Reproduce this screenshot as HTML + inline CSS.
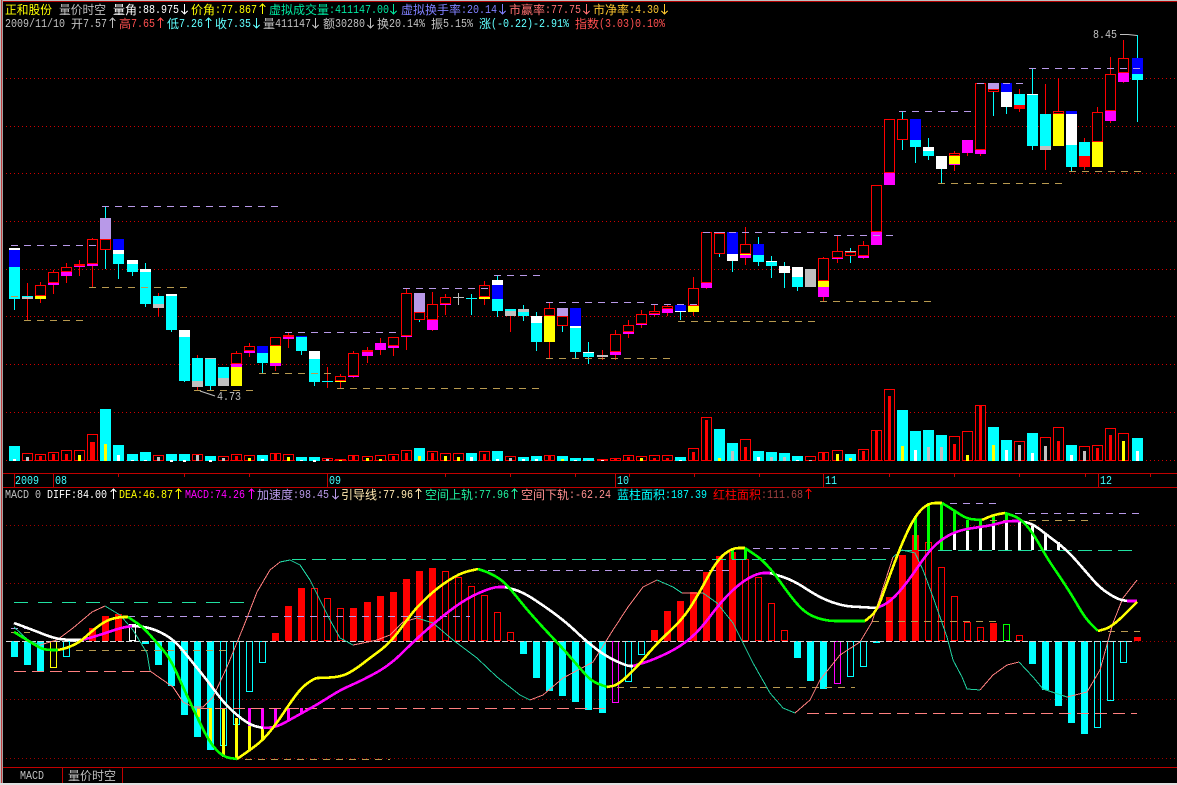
<!DOCTYPE html>
<html lang="zh">
<head>
<meta charset="utf-8">
<title>量价时空</title>
<style>
html,body{margin:0;padding:0;background:#000;width:1177px;height:785px;overflow:hidden}
svg{display:block}
text{font-size:12px;font-family:"Liberation Mono","Noto Sans CJK SC",monospace}
.c{font-family:"Liberation Sans","Noto Sans CJK SC",sans-serif}
.w{fill:none;stroke-width:1}
.l{fill:none;stroke-width:2.6;stroke-linejoin:round}
.t{fill:none;stroke-width:1}
</style>
</head>
<body>
<svg width="1177" height="785" viewBox="0 0 1177 785" xmlns="http://www.w3.org/2000/svg" shape-rendering="crispEdges">
<rect width="1177" height="785" fill="#000"/>
<!-- frame -->
<rect x="0" y="0" width="1177" height="1" fill="#c0c0c0"/>
<rect x="0" y="1" width="1177" height="1" fill="#b00000"/>
<rect x="0" y="0" width="1" height="785" fill="#c0c0c0"/>
<rect x="1" y="0" width="1" height="785" fill="#c04040"/>
<rect x="2" y="0" width="1" height="785" fill="#a8a0a0"/>
<rect x="0" y="783" width="1177" height="2" fill="#e0e0e0"/>
<!-- dotted grid -->
<path fill="none" stroke="#d00000" stroke-dasharray="1 3" d="M6 78.5H1177M6 126.5H1177M6 173.5H1177M6 221.5H1177M6 269.5H1177M6 316.5H1177M6 364.5H1177M6 412.5H1177M6 460.5H1177"/>
<path fill="none" stroke="#a00000" stroke-dasharray="1 3" d="M6 525.5H1177M6 583.5H1177M6 641.5H1177M6 699.5H1177M6 758.5H1177"/>
<!-- axes -->
<path fill="none" stroke="#c00000" d="M3 473.5H1177M3 487.5H1177M3 767.5H1177M62.5 767V783M122.5 767V783M14.5 473V487M53.5 473V487M327.5 473V487M615.5 473V487M823.5 473V487M1098.5 473V487M118.5 473v4M184.5 473v4M249.5 473v4M445.5 473v4M510.5 473v4M575.5 473v4M629.5 473v4M694.5 473v4M759.5 473v4M889.5 473v4M954.5 473v4M1019.5 473v4M1085.5 473v4M1150.5 473v4"/>
<!-- wicks -->
<path class="w" stroke="#00ffff" d="M14.5 299V310M105.5 206V269M118.5 264V279M132.5 272V276M145.5 263V307M171.5 330V332M184.5 381V382M210.5 386V391M262.5 363V373M301.5 351V355M314.5 382V386M419.5 320V322M471.5 294V315M497.5 275V317M523.5 305V321M536.5 312V351M562.5 326V332M575.5 352V358M588.5 342V364M680.5 311V320M719.5 254V257M732.5 261V272M758.5 237V266M771.5 256V278M784.5 262V288M797.5 287V291M850.5 248V263M902.5 111V150M915.5 147V163M928.5 138V160M941.5 169V183M993.5 92V116M1006.5 107V114M1032.5 68V150M1071.5 167V171M1137.5 35V122"/>
<path class="w" stroke="#ff0000" d="M27.5 283V320M40.5 282V303M53.5 270V294M66.5 263V283M79.5 260V276M92.5 238V287M158.5 293V317M197.5 355V390M236.5 351V353M249.5 343V357M275.5 366V371M288.5 332V348M327.5 367V388M340.5 374V388M353.5 351V378M367.5 347V363M380.5 338V355M393.5 348V356M406.5 288V350M432.5 292V331M445.5 294V315M484.5 281V305M510.5 316V332M549.5 303V358M602.5 350V360M615.5 330V360M628.5 320V338M641.5 310V328M654.5 305V317M667.5 304V316M693.5 277V316M706.5 232V289M745.5 227V265M823.5 257V301M837.5 236V263M863.5 241V259M954.5 151V171M967.5 153V156M980.5 150V156M1019.5 89V112M1045.5 84V170M1058.5 78V111M1084.5 138V170M1097.5 107V112M1110.5 57V123M1123.5 40V83"/>
<path class="w" stroke="#c0c0c0" d="M458.5 293V305"/>
<!-- candle bodies -->
<path fill="#00ffff" d="M9 267h11V299h-11zM22 296h11V297h-11zM113 254h11V264h-11zM127 264h11V272h-11zM140 272h11V304h-11zM153 296h11V304h-11zM166 296h11V330h-11zM179 337h11V381h-11zM192 358h11V381h-11zM205 359h11V386h-11zM218 367h11V378h-11zM257 353h11V363h-11zM296 337h11V351h-11zM309 359h11V382h-11zM322 381h11V382h-11zM466 298h11V299h-11zM492 299h11V311h-11zM505 309h11V311h-11zM518 312h11V316h-11zM531 323h11V342h-11zM570 328h11V352h-11zM583 353h11V357h-11zM753 255h11V262h-11zM766 262h11V266h-11zM792 277h11V287h-11zM910 140h11V147h-11zM923 151h11V156h-11zM1014 94h11V105h-11zM1027 95h11V146h-11zM1040 114h11V146h-11zM1066 145h11V167h-11zM1079 142h11V156h-11zM1132 74h11V80h-11z"/>
<path fill="#0000ff" d="M9 250h11V267h-11zM113 239h11V250h-11zM257 346h11V353h-11zM296 336h11V337h-11zM492 285h11V299h-11zM570 308h11V326h-11zM675 305h11V311h-11zM727 232h11V254h-11zM753 244h11V255h-11zM910 119h11V140h-11zM1001 83h11V92h-11zM1066 111h11V114h-11zM1132 58h11V74h-11z"/>
<path fill="#ffffff" d="M9 248h11V250h-11zM113 250h11V254h-11zM127 260h11V264h-11zM140 269h11V272h-11zM166 294h11V296h-11zM179 330h11V337h-11zM309 351h11V359h-11zM492 280h11V285h-11zM531 316h11V323h-11zM570 326h11V328h-11zM583 352h11V353h-11zM675 311h11V312h-11zM727 254h11V261h-11zM766 261h11V262h-11zM779 266h11V273h-11zM792 267h11V277h-11zM923 147h11V151h-11zM936 156h11V169h-11zM1001 92h11V107h-11zM1027 94h11V95h-11zM1066 114h11V145h-11z"/>
<path fill="#c0c0c0" d="M22 297h11V299h-11zM153 304h11V308h-11zM192 381h11V387h-11zM205 358h11V359h-11zM218 378h11V386h-11zM453 297h11V298h-11zM505 311h11V316h-11zM518 309h11V312h-11zM597 355h11V357h-11zM805 269h11V287h-11zM845 251h11V252h-11zM1040 146h11V150h-11z"/>
<path fill="#b899e8" d="M100 218h11V239h-11zM414 293h11V312h-11zM557 308h11V316h-11zM988 83h11V89h-11zM714 232h11V233h-11z"/>
<path fill="#ffff00" d="M35 296h11V299h-11zM231 367h11V386h-11zM270 346h11V363h-11zM335 381h11V382h-11zM479 297h11V299h-11zM544 316h11V342h-11zM688 306h11V312h-11zM740 254h11V255h-11zM818 281h11V287h-11zM949 156h11V164h-11zM1053 114h11V146h-11zM1092 142h11V167h-11z"/>
<path fill="#ff00ff" d="M48 283h11V285h-11zM61 272h11V276h-11zM74 266h11V267h-11zM87 264h11V266h-11zM231 364h11V367h-11zM244 351h11V353h-11zM270 363h11V366h-11zM283 337h11V339h-11zM348 376h11V377h-11zM362 352h11V356h-11zM375 343h11V350h-11zM388 346h11V348h-11zM401 336h11V337h-11zM427 320h11V330h-11zM440 304h11V305h-11zM610 352h11V355h-11zM623 332h11V334h-11zM636 324h11V325h-11zM649 314h11V315h-11zM662 309h11V313h-11zM701 283h11V288h-11zM740 255h11V258h-11zM818 287h11V297h-11zM832 258h11V259h-11zM858 256h11V258h-11zM871 232h11V245h-11zM884 173h11V185h-11zM949 164h11V165h-11zM962 140h11V153h-11zM975 150h11V154h-11zM1105 111h11V121h-11zM1118 73h11V82h-11z"/>
<path fill="#ff0000" d="M1079 156h11V167h-11zM1014 105h11V109h-11z"/>
<path fill="#000" stroke="#ff0000" d="M35.5 285.5h10V295.5h-10zM48.5 272.5h10V282.5h-10zM61.5 267.5h10V271.5h-10zM74.5 264.5h10V265.5h-10zM87.5 239.5h10V263.5h-10zM100.5 239.5h10V249.5h-10zM231.5 353.5h10V363.5h-10zM244.5 346.5h10V350.5h-10zM270.5 337.5h10V345.5h-10zM283.5 335.5h10V336.5h-10zM335.5 376.5h10V380.5h-10zM348.5 353.5h10V375.5h-10zM362.5 350.5h10V351.5h-10zM388.5 337.5h10V345.5h-10zM401.5 293.5h10V335.5h-10zM414.5 312.5h10V319.5h-10zM427.5 304.5h10V319.5h-10zM440.5 297.5h10V303.5h-10zM479.5 285.5h10V296.5h-10zM544.5 308.5h10V315.5h-10zM557.5 316.5h10V325.5h-10zM610.5 334.5h10V351.5h-10zM623.5 325.5h10V331.5h-10zM636.5 314.5h10V323.5h-10zM649.5 311.5h10V313.5h-10zM662.5 306.5h10V308.5h-10zM688.5 288.5h10V305.5h-10zM701.5 232.5h10V282.5h-10zM714.5 233.5h10V253.5h-10zM740.5 244.5h10V253.5h-10zM818.5 258.5h10V280.5h-10zM832.5 251.5h10V257.5h-10zM845.5 252.5h10V255.5h-10zM858.5 245.5h10V255.5h-10zM871.5 185.5h10V231.5h-10zM884.5 119.5h10V172.5h-10zM897.5 119.5h10V139.5h-10zM949.5 153.5h10V155.5h-10zM975.5 83.5h10V149.5h-10zM988.5 89.5h10V91.5h-10zM1053.5 111.5h10V113.5h-10zM1092.5 112.5h10V141.5h-10zM1105.5 74.5h10V110.5h-10zM1118.5 58.5h10V72.5h-10z"/>
<!-- price dashed levels -->
<path fill="none" stroke="#b899e8" stroke-dasharray="7 6" d="M102 206.5H279M11 245.5H100M285 332.5H397M403 288.5H488M494 275.5H540M546 302.5H645M651 304.5H697M703 232.5H827M834 235.5H893M899 111.5H971M977 83.5H1025M1029 68.5H1141"/>
<path fill="none" stroke="#b89a50" stroke-dasharray="7 6" d="M24 320.5H83M89 287.5H188M194 390.5H253M259 373.5H331M337 388.5H540M546 358.5H672M678 321.5H815M820 301.5H933M938 183.5H1062M1069 171.5H1141M11 296.5H18"/>
<!-- price labels -->
<path fill="none" stroke="#c0c0c0" shape-rendering="auto" d="M200 391L215 396M1120 34.5H1128L1137 35.5"/>
<text x="217" y="400" textLength="24" lengthAdjust="spacingAndGlyphs" fill="#c0c0c0" shape-rendering="auto">4.73</text>
<text x="1093" y="38" textLength="24" lengthAdjust="spacingAndGlyphs" fill="#c0c0c0">8.45</text>
<!-- volume -->
<path fill="#00ffff" d="M9 446h11V461h-11zM100 409h11V461h-11zM113 445h11V461h-11zM127 454h11V461h-11zM140 452h11V461h-11zM166 454h11V461h-11zM179 454h11V461h-11zM205 456h11V461h-11zM257 455h11V461h-11zM296 457h11V461h-11zM309 457h11V461h-11zM414 448h11V461h-11zM466 453h11V461h-11zM492 451h11V461h-11zM518 457h11V461h-11zM531 456h11V461h-11zM557 456h11V461h-11zM570 458h11V461h-11zM583 458h11V461h-11zM675 457h11V461h-11zM714 429h11V461h-11zM727 443h11V461h-11zM753 451h11V461h-11zM766 452h11V461h-11zM779 453h11V461h-11zM792 456h11V461h-11zM845 454h11V461h-11zM897 410h11V461h-11zM910 431h11V461h-11zM923 430h11V461h-11zM936 435h11V461h-11zM988 427h11V461h-11zM1001 440h11V461h-11zM1027 433h11V461h-11zM1066 445h11V461h-11zM1132 438h11V461h-11z"/>
<path fill="#000" stroke="#ff0000" d="M22.5 453.5h10V460.5h-10zM35.5 454.5h10V460.5h-10zM48.5 452.5h10V460.5h-10zM61.5 450.5h10V460.5h-10zM74.5 450.5h10V460.5h-10zM87.5 434.5h10V460.5h-10zM153.5 455.5h10V460.5h-10zM192.5 454.5h10V460.5h-10zM218.5 456.5h10V460.5h-10zM231.5 454.5h10V460.5h-10zM244.5 455.5h10V460.5h-10zM270.5 453.5h10V460.5h-10zM283.5 454.5h10V460.5h-10zM322.5 458.5h10V460.5h-10zM335.5 459.5h10V460.5h-10zM348.5 455.5h10V460.5h-10zM362.5 456.5h10V460.5h-10zM375.5 455.5h10V460.5h-10zM388.5 454.5h10V460.5h-10zM401.5 450.5h10V460.5h-10zM427.5 451.5h10V460.5h-10zM440.5 453.5h10V460.5h-10zM453.5 453.5h10V460.5h-10zM479.5 451.5h10V460.5h-10zM505.5 456.5h10V460.5h-10zM544.5 455.5h10V460.5h-10zM597.5 459.5h10V460.5h-10zM610.5 458.5h10V460.5h-10zM623.5 455.5h10V460.5h-10zM636.5 456.5h10V460.5h-10zM649.5 455.5h10V460.5h-10zM662.5 455.5h10V460.5h-10zM688.5 448.5h10V460.5h-10zM701.5 417.5h10V460.5h-10zM740.5 439.5h10V460.5h-10zM805.5 456.5h10V460.5h-10zM818.5 452.5h10V460.5h-10zM832.5 450.5h10V460.5h-10zM858.5 449.5h10V460.5h-10zM871.5 430.5h10V460.5h-10zM884.5 389.5h10V460.5h-10zM949.5 436.5h10V460.5h-10zM962.5 431.5h10V460.5h-10zM975.5 405.5h10V460.5h-10zM1014.5 441.5h10V460.5h-10zM1040.5 437.5h10V460.5h-10zM1053.5 427.5h10V460.5h-10zM1079.5 446.5h10V460.5h-10zM1092.5 445.5h10V460.5h-10zM1105.5 428.5h10V460.5h-10zM1118.5 433.5h10V460.5h-10z"/>
<path fill="#ffffff" d="M13 459h3V461h-3zM117 455h3V461h-3zM131 460h3V461h-3zM144 460h3V461h-3zM170 460h3V462h-3zM183 460h3V462h-3zM209 460h3V462h-3zM261 459h3V461h-3zM300 460h3V461h-3zM313 460h3V462h-3zM470 457h3V461h-3zM496 459h3V461h-3zM522 459h3V461h-3zM535 459h3V461h-3zM574 460h3V461h-3zM601 460h3V461h-3zM679 460h3V461h-3zM757 457h3V461h-3zM796 460h3V461h-3zM914 450h3V461h-3zM1005 450h3V461h-3zM1031 453h3V461h-3zM1070 455h3V461h-3zM1136 451h3V461h-3z"/>
<path fill="#c0c0c0" d="M26 457h3V461h-3zM157 457h3V461h-3zM196 455h3V461h-3zM222 458h3V461h-3zM326 459h3V461h-3zM509 458h3V461h-3zM587 460h3V461h-3zM731 451h3V461h-3zM770 457h3V461h-3zM783 457h3V461h-3zM809 460h3V461h-3zM927 447h3V461h-3zM940 447h3V461h-3zM1018 445h3V461h-3zM1044 446h3V461h-3zM1083 451h3V461h-3z"/>
<path fill="#ffff00" d="M78 455h3V461h-3zM104 444h3V461h-3zM248 458h3V461h-3zM287 457h3V461h-3zM339 460h3V461h-3zM366 458h3V461h-3zM379 459h3V461h-3zM418 456h3V461h-3zM444 456h3V461h-3zM457 457h3V461h-3zM561 459h3V461h-3zM640 458h3V461h-3zM718 458h3V461h-3zM836 454h3V461h-3zM849 458h3V461h-3zM901 446h3V461h-3zM966 455h3V461h-3zM992 445h3V461h-3zM1122 441h3V461h-3z"/>
<path fill="#ff0000" d="M39 456h3V461h-3zM52 454h3V461h-3zM65 454h3V461h-3zM90 442h5V461h-5zM235 456h3V461h-3zM274 454h3V461h-3zM352 456h3V461h-3zM392 456h3V461h-3zM405 453h3V461h-3zM431 453h3V461h-3zM483 454h3V461h-3zM548 456h3V461h-3zM614 459h3V461h-3zM627 457h3V461h-3zM653 458h3V461h-3zM666 458h3V461h-3zM692 452h3V461h-3zM705 420h3V461h-3zM744 447h3V461h-3zM822 453h3V461h-3zM862 451h3V461h-3zM875 431h3V461h-3zM888 396h3V461h-3zM953 444h3V461h-3zM979 406h3V461h-3zM1057 441h3V461h-3zM1096 448h3V461h-3zM1109 435h3V461h-3z"/>
<!-- MACD histogram -->
<path fill="#00ffff" d="M11 641h7V657h-7zM24 641h7V665h-7zM37 641h7V672h-7zM142 641h7V644h-7zM155 641h7V665h-7zM168 641h7V686h-7zM181 641h7V715h-7zM194 641h7V737h-7zM207 641h7V750h-7zM520 641h7V654h-7zM533 641h7V678h-7zM546 641h7V691h-7zM559 641h7V696h-7zM572 641h7V702h-7zM585 641h7V710h-7zM599 641h7V713h-7zM794 641h7V658h-7zM807 641h7V681h-7zM820 641h7V689h-7zM1029 641h7V664h-7zM1042 641h7V690h-7zM1055 641h7V706h-7zM1068 641h7V723h-7zM1081 641h7V734h-7z"/>
<path fill="#ff0000" d="M89 628h7V641h-7zM102 616h7V641h-7zM115 614h7V641h-7zM272 633h7V641h-7zM285 606h7V641h-7zM298 588h7V641h-7zM350 608h7V641h-7zM364 602h7V641h-7zM377 596h7V641h-7zM390 592h7V641h-7zM403 579h7V641h-7zM416 571h7V641h-7zM429 568h7V641h-7zM651 630h7V641h-7zM664 611h7V641h-7zM677 601h7V641h-7zM690 592h7V641h-7zM703 572h7V641h-7zM716 556h7V641h-7zM729 552h7V641h-7zM886 597h7V641h-7zM899 555h7V641h-7zM912 535h7V641h-7zM990 623h7V641h-7zM1134 637h7V641h-7z"/>
<path fill="none" stroke="#00ffff" d="M63.5 641.5h6V656.5h-6zM220.5 641.5h6V745.5h-6zM233.5 641.5h6V724.5h-6zM246.5 641.5h6V691.5h-6zM259.5 641.5h6V662.5h-6zM625.5 641.5h6V681.5h-6zM638.5 641.5h6V654.5h-6zM847.5 641.5h6V676.5h-6zM860.5 641.5h6V666.5h-6zM873.5 641.5h6V642.5h-6zM1094.5 641.5h6V727.5h-6zM1107.5 641.5h6V700.5h-6zM1120.5 641.5h6V662.5h-6z"/>
<path fill="none" stroke="#ff0000" d="M311.5 588.5h6V640.5h-6zM324.5 598.5h6V640.5h-6zM337.5 608.5h6V640.5h-6zM442.5 571.5h6V640.5h-6zM455.5 577.5h6V640.5h-6zM468.5 586.5h6V640.5h-6zM481.5 595.5h6V640.5h-6zM494.5 612.5h6V640.5h-6zM507.5 632.5h6V640.5h-6zM742.5 559.5h6V640.5h-6zM755.5 577.5h6V640.5h-6zM768.5 603.5h6V640.5h-6zM781.5 630.5h6V640.5h-6zM925.5 542.5h6V640.5h-6zM938.5 567.5h6V640.5h-6zM951.5 596.5h6V640.5h-6zM964.5 622.5h6V640.5h-6zM977.5 627.5h6V640.5h-6zM1016.5 635.5h6V640.5h-6z"/>
<path fill="none" stroke="#ffff00" d="M50.5 641.5h6V667.5h-6z"/>
<path fill="none" stroke="#ffffff" d="M129.5 624.5h6V640.5h-6z"/>
<path fill="none" stroke="#ff00ff" d="M612.5 641.5h6V702.5h-6zM834.5 641.5h6V683.5h-6z"/>
<path fill="none" stroke="#00ff00" d="M1003.5 624.5h6V640.5h-6z"/>
<path fill="none" stroke="#d8d8d8" stroke-dasharray="6 2" d="M6 641.5H1132"/>
<!-- connector bars -->
<path fill="#ffff00" d="M197 708h3V717h-3zM209 708h3V743h-3zM222 708h3V757h-3zM235 718h3V759h-3zM248 726h3V750h-3zM261 728h3V740h-3z"/>
<path fill="#ff00ff" d="M248 708h3V726h-3zM261 708h3V728h-3zM274 708h3V727h-3zM287 708h3V721h-3zM300 708h3V713h-3z"/>
<path fill="#00ff00" d="M914 516h3V550h-3zM927 503h3V550h-3zM940 503h3V550h-3zM953 510h3V533h-3zM966 520h3V531h-3zM979 520h3V527h-3zM992 516h3V525h-3zM1005 513h3V521h-3zM731 548h3V559h-3zM744 548h3V559h-3z"/>
<path fill="#ffffff" d="M953 533h3V550h-3zM966 531h3V550h-3zM979 527h3V550h-3zM992 525h3V550h-3zM1005 521h3V550h-3zM1018 520h3V550h-3zM1031 526h3V550h-3zM1044 534h3V550h-3zM1057 542h3V550h-3z"/>
<!-- MACD dashed levels -->
<path fill="none" stroke="#20e0a0" stroke-dasharray="14 10" d="M14 602.5H250"/>
<path fill="none" stroke="#20e0a0" stroke-dasharray="14 6" d="M292 559.5H887M898 550.5H1137"/>
<path fill="none" stroke="#b899e8" stroke-dasharray="7 6" d="M11 628.5H30M128 616.5H470M488 570.5H735M753 548.5H893M950 503.5H998M1015 513.5H1141"/>
<path fill="none" stroke="#b89a50" stroke-dasharray="7 6" d="M11 632.5H30M76 650.5H227M872 621.5H1000M990 520.5H1090M1108 631.5H1140M617 687.5H855M245 759.5H390"/>
<path fill="none" stroke="#ff8080" stroke-dasharray="12 6" d="M14 671.5H150M197 708.5H610M807 713.5H1137"/>
<!-- thin line -->
<polyline class="t" stroke="#20d0a0" points="14,627 28,640 40,645"/>
<polyline class="t" stroke="#ff8080" points="40,645 57,640 73,628 92,612 105,606"/>
<polyline class="t" stroke="#20d0a0" points="105,606 120,615 133,630 147,653 150,671"/>
<polyline class="t" stroke="#ff8080" points="150,671 160,678 173,687 183,702 193,707 203,707 213,697 227,667 245,623 257,592 270,570 280,562"/>
<polyline class="t" stroke="#20d0a0" points="280,562 290,560 300,565 310,580 320,600 330,620 340,638 353,645"/>
<polyline class="t" stroke="#ff8080" points="353,645 363,643 377,640 390,635 403,622 417,618"/>
<polyline class="t" stroke="#20d0a0" points="417,618 433,623 453,640 477,658 497,677 520,695 530,700"/>
<polyline class="t" stroke="#ff8080" points="530,700 543,695 563,678 593,662 613,630 628,607 643,587 657,580"/>
<polyline class="t" stroke="#20d0a0" points="657,580 673,587 682,593"/>
<polyline class="t" stroke="#ff8080" points="682,593 703,593"/>
<polyline class="t" stroke="#20d0a0" points="703,593 717,603 733,623 743,643 753,663 770,693 783,708 795,713"/>
<polyline class="t" stroke="#ff8080" points="795,713 810,700 820,680 840,655 860,642 872,622 893,557"/>
<polyline class="t" stroke="#20d0a0" points="893,557 902,550 915,553 923,570 933,597 947,637 953,660 962,677 967,689 980,690"/>
<polyline class="t" stroke="#ff8080" points="980,690 993,675 1007,665 1019,662"/>
<polyline class="t" stroke="#20d0a0" points="1019,662 1033,677 1043,689 1067,697"/>
<polyline class="t" stroke="#ff8080" points="1067,697 1087,692 1100,670 1113,623 1123,598 1137,580"/>
<!-- DEA line -->
<path class="l" stroke="#ffffff" d="M14 623L23.5 626.5Q33 630 43 634Q53 638 60 639Q67 640 74.5 640L82 640"/>
<path class="l" stroke="#ff00ff" d="M82 640L91 637.5Q100 635 110 631.5Q120 628 126 627L132 626"/>
<path class="l" stroke="#ffffff" d="M132 626L139.5 626.5Q147 627 155 630Q163 633 170 638Q177 643 185 653Q193 663 200 671.5Q207 680 213.5 689Q220 698 226.5 705Q233 712 241.5 718.5Q250 725 256.5 726.5L263 728"/>
<path class="l" stroke="#ff00ff" d="M263 728L270 727.5Q277 727 285 722.5Q293 718 306.5 710.5Q320 703 330 696.5Q340 690 351.5 685Q363 680 376.5 672.5Q390 665 401.5 653.5Q413 642 426.5 630Q440 618 453.5 608Q467 598 480 592.5Q493 587 499 587L505 587"/>
<path class="l" stroke="#ffffff" d="M505 587L514 589.5Q523 592 535 600Q547 608 557 615.5Q567 623 577 632.5Q587 642 597 649.5Q607 657 617 661.5Q627 666 630 666L633 666"/>
<path class="l" stroke="#ff00ff" d="M633 666L643 663Q653 660 666.5 653.5Q680 647 690 638.5Q700 630 710 616.5Q720 603 730 593Q740 583 749 578Q758 573 764 573L770 573"/>
<path class="l" stroke="#ffffff" d="M770 573L781.5 576.5Q793 580 806.5 589Q820 598 831.5 602Q843 606 851.5 606.5Q860 607 868.5 607.5L877 608"/>
<path class="l" stroke="#ff00ff" d="M877 608L883.5 605Q890 602 898.5 592.5Q907 583 917.5 567.5Q928 552 935.5 545Q943 538 951.5 534Q960 530 970 528.5Q980 527 986.5 526Q993 525 1000 523Q1007 521 1013.5 521L1020 521"/>
<path class="l" stroke="#ffffff" d="M1020 521L1026.5 522.5Q1033 524 1040 529.5Q1047 535 1057 542.5Q1067 550 1077 561.5Q1087 573 1093.5 580.5Q1100 588 1108.5 593.5Q1117 599 1122 600L1127 601"/>
<path class="l" stroke="#ff00ff" d="M1127 601L1137 601"/>
<!-- DIFF line -->
<path class="l" stroke="#00ff00" d="M14 632L20.5 636Q27 640 33.5 644Q40 648 43.5 649Q47 650 52.5 650L58 650"/>
<path class="l" stroke="#ffff00" d="M58 650L62.5 649Q67 648 73.5 645Q80 642 86.5 636Q93 630 100 625Q107 620 113.5 618.5Q120 617 124 617L128 617"/>
<path class="l" stroke="#00ff00" d="M128 617L135.5 622Q143 627 150 635Q157 643 163.5 650.5Q170 658 176.5 672.5Q183 687 190 702Q197 717 203.5 730Q210 743 216.5 750Q223 757 230 758L237 759"/>
<path class="l" stroke="#ffff00" d="M237 759L243.5 754.5Q250 750 256.5 745Q263 740 270 731.5Q277 723 283.5 713Q290 703 296 695Q302 687 308.5 682.5Q315 678 317.5 678Q320 678 330 677.5Q340 677 346.5 674Q353 671 361.5 664.5Q370 658 380 650.5Q390 643 398.5 631.5Q407 620 412 613.5Q417 607 427 597.5Q437 588 448.5 580.5Q460 573 469 571L478 569"/>
<path class="l" stroke="#00ff00" d="M478 569L484 571Q490 573 497.5 577.5Q505 582 516 596Q527 610 538.5 622.5Q550 635 558.5 644Q567 653 575 662.5Q583 672 588 677Q593 682 600 684.5L607 687"/>
<path class="l" stroke="#ffff00" d="M607 687L612.5 686Q618 685 627.5 676Q637 667 647 655Q657 643 669.5 631.5Q682 620 689.5 608.5Q697 597 707 578.5Q717 560 724.5 554Q732 548 738.5 548L745 548"/>
<path class="l" stroke="#00ff00" d="M745 548L756 555.5Q767 563 780 581.5Q793 600 800.5 607.5Q808 615 817.5 618Q827 621 835 621Q843 621 854 621L865 621"/>
<path class="l" stroke="#ffff00" d="M865 621L871 616Q877 611 882.5 595.5Q888 580 895 561.5Q902 543 908.5 529.5Q915 516 921.5 509.5Q928 503 935 503L942 503"/>
<path class="l" stroke="#00ff00" d="M942 503L948.5 507Q955 511 961 515Q967 519 974.5 519.5L982 520"/>
<path class="l" stroke="#ffff00" d="M982 520L987.5 517.5Q993 515 999 514L1005 513"/>
<path class="l" stroke="#00ff00" d="M1005 513L1012.5 515.5Q1020 518 1026.5 525.5Q1033 533 1040 545.5Q1047 558 1053.5 567.5Q1060 577 1066.5 587Q1073 597 1079 607.5Q1085 618 1091.5 624.5L1098 631"/>
<path class="l" stroke="#ffff00" d="M1098 631L1105 629Q1112 627 1124.5 614.5L1137 602"/>
<!-- header line 1 -->
<text class="c" x="5" y="14" textLength="47" lengthAdjust="spacingAndGlyphs" fill="#ffff00">正和股份</text>
<text class="c" x="59" y="14" textLength="47" lengthAdjust="spacingAndGlyphs" fill="#c0c0c0">量价时空</text>
<text class="c" x="113" y="14" textLength="24" lengthAdjust="spacingAndGlyphs" fill="#ffffff">量角</text>
<text x="137" y="13" textLength="42" lengthAdjust="spacingAndGlyphs" fill="#ffffff">:88.975</text>
<path fill="none" stroke="#ffffff" d="M184.5 4v10m-3-3l3 3 3-3"/>
<text class="c" x="191" y="14" textLength="24" lengthAdjust="spacingAndGlyphs" fill="#ffff00">价角</text>
<text x="215" y="13" textLength="42" lengthAdjust="spacingAndGlyphs" fill="#ffff00">:77.867</text>
<path fill="none" stroke="#ffff00" d="M262.5 14v-10m-3 3l3-3 3 3"/>
<text class="c" x="269" y="14" textLength="60" lengthAdjust="spacingAndGlyphs" fill="#00e8a0">虚拟成交量</text>
<text x="329" y="13" textLength="60" lengthAdjust="spacingAndGlyphs" fill="#00e8a0">:411147.00</text>
<path fill="none" stroke="#00e8a0" d="M393.5 4v10m-3-3l3 3 3-3"/>
<text class="c" x="401" y="14" textLength="60" lengthAdjust="spacingAndGlyphs" fill="#8080ff">虚拟换手率</text>
<text x="461" y="13" textLength="36" lengthAdjust="spacingAndGlyphs" fill="#8080ff">:20.14</text>
<path fill="none" stroke="#8080ff" d="M502.5 4v10m-3-3l3 3 3-3"/>
<text class="c" x="509" y="14" textLength="36" lengthAdjust="spacingAndGlyphs" fill="#ff7070">市赢率</text>
<text x="545" y="13" textLength="36" lengthAdjust="spacingAndGlyphs" fill="#ff7070">:77.75</text>
<path fill="none" stroke="#ff7070" d="M586.5 4v10m-3-3l3 3 3-3"/>
<text class="c" x="593" y="14" textLength="36" lengthAdjust="spacingAndGlyphs" fill="#ffc830">市净率</text>
<text x="629" y="13" textLength="30" lengthAdjust="spacingAndGlyphs" fill="#ffc830">:4.30</text>
<path fill="none" stroke="#ffc830" d="M664.5 4v10m-3-3l3 3 3-3"/>
<!-- header line 2 -->
<text x="5" y="27" textLength="60" lengthAdjust="spacingAndGlyphs" fill="#c0c0c0">2009/11/10</text>
<text class="c" x="71" y="28" fill="#c0c0c0">开</text>
<text x="83" y="27" textLength="24" lengthAdjust="spacingAndGlyphs" fill="#c0c0c0">7.57</text>
<path fill="none" stroke="#c0c0c0" d="M112.5 28v-10m-3 3l3-3 3 3"/>
<text class="c" x="119" y="28" fill="#ff5050">高</text>
<text x="131" y="27" textLength="24" lengthAdjust="spacingAndGlyphs" fill="#ff5050">7.65</text>
<path fill="none" stroke="#ff5050" d="M160.5 28v-10m-3 3l3-3 3 3"/>
<text class="c" x="167" y="28" fill="#60ffff">低</text>
<text x="179" y="27" textLength="24" lengthAdjust="spacingAndGlyphs" fill="#60ffff">7.26</text>
<path fill="none" stroke="#60ffff" d="M208.5 28v-10m-3 3l3-3 3 3"/>
<text class="c" x="215" y="28" fill="#60ffff">收</text>
<text x="227" y="27" textLength="24" lengthAdjust="spacingAndGlyphs" fill="#60ffff">7.35</text>
<path fill="none" stroke="#60ffff" d="M256.5 18v10m-3-3l3 3 3-3"/>
<text class="c" x="263" y="28" fill="#c0c0c0">量</text>
<text x="275" y="27" textLength="36" lengthAdjust="spacingAndGlyphs" fill="#c0c0c0">411147</text>
<path fill="none" stroke="#c0c0c0" d="M315.5 18v10m-3-3l3 3 3-3"/>
<text class="c" x="323" y="28" fill="#c0c0c0">额</text>
<text x="335" y="27" textLength="30" lengthAdjust="spacingAndGlyphs" fill="#c0c0c0">30280</text>
<path fill="none" stroke="#c0c0c0" d="M370.5 18v10m-3-3l3 3 3-3"/>
<text class="c" x="377" y="28" fill="#c0c0c0">换</text>
<text x="389" y="27" textLength="36" lengthAdjust="spacingAndGlyphs" fill="#c0c0c0">20.14%</text>
<text class="c" x="431" y="28" fill="#c0c0c0">振</text>
<text x="443" y="27" textLength="30" lengthAdjust="spacingAndGlyphs" fill="#c0c0c0">5.15%</text>
<text class="c" x="479" y="28" fill="#60ffff">涨</text>
<text x="491" y="27" textLength="78" lengthAdjust="spacingAndGlyphs" fill="#60ffff">(-0.22)-2.91%</text>
<text class="c" x="575" y="28" textLength="24" lengthAdjust="spacingAndGlyphs" fill="#ff5050">指数</text>
<text x="599" y="27" textLength="66" lengthAdjust="spacingAndGlyphs" fill="#ff5050">(3.03)0.10%</text>
<!-- date labels -->
<text x="15" y="484" textLength="24" lengthAdjust="spacingAndGlyphs" fill="#40ffff">2009</text>
<text x="55" y="484" textLength="12" lengthAdjust="spacingAndGlyphs" fill="#40ffff">08</text>
<text x="329" y="484" textLength="12" lengthAdjust="spacingAndGlyphs" fill="#40ffff">09</text>
<text x="617" y="484" textLength="12" lengthAdjust="spacingAndGlyphs" fill="#40ffff">10</text>
<text x="825" y="484" textLength="12" lengthAdjust="spacingAndGlyphs" fill="#40ffff">11</text>
<text x="1100" y="484" textLength="12" lengthAdjust="spacingAndGlyphs" fill="#40ffff">12</text>
<!-- indicator title -->
<text x="5" y="498" textLength="36" lengthAdjust="spacingAndGlyphs" fill="#c0c0c0">MACD 0</text>
<text x="47" y="498" textLength="60" lengthAdjust="spacingAndGlyphs" fill="#ffffff">DIFF:84.00</text>
<path fill="none" stroke="#ffffff" d="M113.5 499v-10m-3 3l3-3 3 3"/>
<text x="119" y="498" textLength="54" lengthAdjust="spacingAndGlyphs" fill="#ffff00">DEA:46.87</text>
<path fill="none" stroke="#ffff00" d="M178.5 499v-10m-3 3l3-3 3 3"/>
<text x="185" y="498" textLength="60" lengthAdjust="spacingAndGlyphs" fill="#ff00ff">MACD:74.26</text>
<path fill="none" stroke="#ff00ff" d="M251.5 499v-10m-3 3l3-3 3 3"/>
<text class="c" x="257" y="499" textLength="36" lengthAdjust="spacingAndGlyphs" fill="#b899e8">加速度</text>
<text x="293" y="498" textLength="36" lengthAdjust="spacingAndGlyphs" fill="#b899e8">:98.45</text>
<path fill="none" stroke="#b899e8" d="M335.5 489v10m-3-3l3 3 3-3"/>
<text class="c" x="341" y="499" textLength="36" lengthAdjust="spacingAndGlyphs" fill="#ffe8b0">引导线</text>
<text x="377" y="498" textLength="36" lengthAdjust="spacingAndGlyphs" fill="#ffe8b0">:77.96</text>
<path fill="none" stroke="#ffe8b0" d="M418.5 499v-10m-3 3l3-3 3 3"/>
<text class="c" x="425" y="499" textLength="48" lengthAdjust="spacingAndGlyphs" fill="#20f0a0">空间上轨</text>
<text x="473" y="498" textLength="36" lengthAdjust="spacingAndGlyphs" fill="#20f0a0">:77.96</text>
<path fill="none" stroke="#20f0a0" d="M514.5 499v-10m-3 3l3-3 3 3"/>
<text class="c" x="521" y="499" textLength="48" lengthAdjust="spacingAndGlyphs" fill="#ff9090">空间下轨</text>
<text x="569" y="498" textLength="42" lengthAdjust="spacingAndGlyphs" fill="#ff9090">:-62.24</text>
<text class="c" x="617" y="499" textLength="48" lengthAdjust="spacingAndGlyphs" fill="#00ffff">蓝柱面积</text>
<text x="665" y="498" textLength="42" lengthAdjust="spacingAndGlyphs" fill="#00ffff">:187.39</text>
<text class="c" x="713" y="499" textLength="48" lengthAdjust="spacingAndGlyphs" fill="#ff0000">红柱面积</text>
<text x="761" y="498" textLength="42" lengthAdjust="spacingAndGlyphs" fill="#a04040">:111.68</text>
<path fill="none" stroke="#ff0000" d="M808.5 499v-10m-3 3l3-3 3 3"/>
<!-- tabs -->
<text x="20" y="779" textLength="24" lengthAdjust="spacingAndGlyphs" fill="#c0c0c0">MACD</text>
<text class="c" x="68" y="780" textLength="48" lengthAdjust="spacingAndGlyphs" fill="#c0c0c0">量价时空</text>
</svg>
</body>
</html>
